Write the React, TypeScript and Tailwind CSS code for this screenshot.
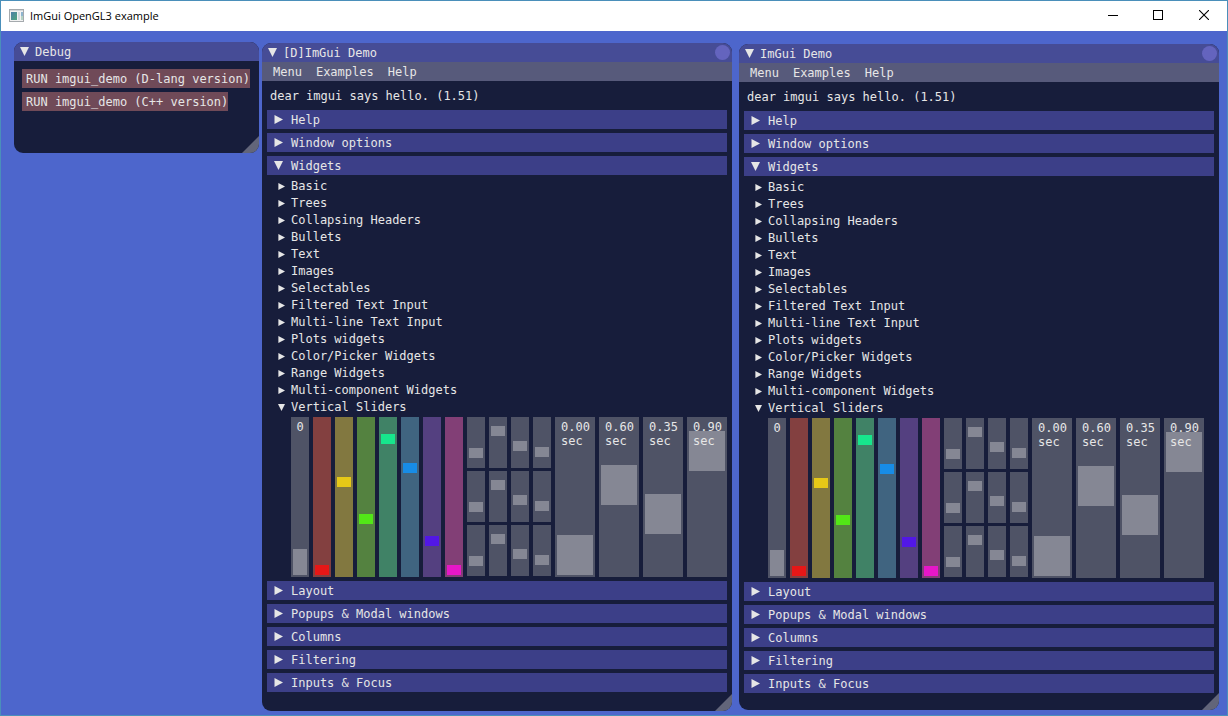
import React from "react";

type SliderSpec = { label: string; value: number; frame: string; grab: string };

const colorSliders: SliderSpec[] = [
  { label: "Hue 1", value: 0, frame: "bg-[#834040]", grab: "[&::-webkit-slider-thumb]:bg-[#e61717]" },
  { label: "Hue 2", value: 0.6, frame: "bg-[#827840]", grab: "[&::-webkit-slider-thumb]:bg-[#e6c817]" },
  { label: "Hue 3", value: 0.35, frame: "bg-[#548240]", grab: "[&::-webkit-slider-thumb]:bg-[#52e617]" },
  { label: "Hue 4", value: 0.9, frame: "bg-[#408266]", grab: "[&::-webkit-slider-thumb]:bg-[#17e68c]" },
  { label: "Hue 5", value: 0.7, frame: "bg-[#406480]", grab: "[&::-webkit-slider-thumb]:bg-[#178ce6]" },
  { label: "Hue 6", value: 0.2, frame: "bg-[#544080]", grab: "[&::-webkit-slider-thumb]:bg-[#5217e6]" },
  { label: "Hue 7", value: 0, frame: "bg-[#823f76]", grab: "[&::-webkit-slider-thumb]:bg-[#e617c8]" },
];

const smallValues = [0.22, 0.8, 0.4, 0.25];
const wideValues = [0, 0.6, 0.35, 0.9];

const treeItems = [
  "Basic",
  "Trees",
  "Collapsing Headers",
  "Bullets",
  "Text",
  "Images",
  "Selectables",
  "Filtered Text Input",
  "Multi-line Text Input",
  "Plots widgets",
  "Color/Picker Widgets",
  "Range Widgets",
  "Multi-component Widgets",
];

const lowerHeaders = ["Layout", "Popups & Modal windows", "Columns", "Filtering", "Inputs & Focus"];

const grabGray = "[&::-webkit-slider-thumb]:bg-[#858794]";
const frameGray = "bg-[#4f5366]";

function Arrow({ open = false, small = false }: { open?: boolean; small?: boolean }) {
  return (
    <svg viewBox="0 0 9 9" className={small ? "size-[7px] shrink-0" : "size-[9px] shrink-0"} fill="#e6e6e6" aria-hidden="true">
      <path d={open ? "M0 0H9L4.5 9Z" : "M0.5 0V9L9 4.5Z"} />
    </svg>
  );
}

function VSlider({
  label,
  value,
  size,
  frame,
  grab,
}: {
  label: string;
  value: number;
  size: string;
  frame: string;
  grab: string;
}) {
  return (
    <input
      type="range"
      aria-label={label}
      min={0}
      max={1}
      step="any"
      defaultValue={value}
      className={`m-0 block appearance-none p-0.5 [direction:rtl] [writing-mode:vertical-lr] [&::-webkit-slider-thumb]:appearance-none ${size} ${frame} ${grab}`}
    />
  );
}

function VerticalSliders() {
  const thin = "h-40 w-[18px] [&::-webkit-slider-thumb]:w-3.5 [&::-webkit-slider-thumb]:h-2.5";
  return (
    <div className="ml-6 flex gap-1 pb-1">
      <div className="relative">
        <VSlider
          label="int"
          value={0}
          size="h-40 w-[18px] [&::-webkit-slider-thumb]:w-3.5 [&::-webkit-slider-thumb]:h-[26px]"
          frame={frameGray}
          grab={grabGray}
        />
        <span className="pointer-events-none absolute inset-x-0 top-[3px] text-center leading-[14px]">0</span>
      </div>
      {colorSliders.map((s) => (
        <VSlider key={s.label} label={s.label} value={s.value} size={thin} frame={s.frame} grab={s.grab} />
      ))}
      {smallValues.map((v, col) => (
        <div key={col} className="flex flex-col gap-[3px]">
          {[0, 1, 2].map((row) => (
            <VSlider
              key={row}
              label={`Column ${col + 1} row ${row + 1}`}
              value={v}
              size="h-[51px] w-[18px] [&::-webkit-slider-thumb]:w-3.5 [&::-webkit-slider-thumb]:h-2.5"
              frame={frameGray}
              grab={grabGray}
            />
          ))}
        </div>
      ))}
      {wideValues.map((v) => (
        <div key={v} className="relative">
          <VSlider
            label={`${v.toFixed(2)} sec`}
            value={v}
            size="h-40 w-10 [&::-webkit-slider-thumb]:w-9 [&::-webkit-slider-thumb]:h-10"
            frame={frameGray}
            grab={grabGray}
          />
          <span className="pointer-events-none absolute top-[3px] left-1.5 leading-[14px]">
            {v.toFixed(2)}
            <br />
            sec
          </span>
        </div>
      ))}
    </div>
  );
}

function Header({ label, open = false }: { label: string; open?: boolean }) {
  return (
    <button
      type="button"
      aria-expanded={open}
      className="mb-1 flex h-[19px] w-full items-center gap-2 bg-[#3c3f88] pl-[7px] text-left"
    >
      <Arrow open={open} />
      <span className="pt-0.5">{label}</span>
    </button>
  );
}

function TreeItem({ label, open = false }: { label: string; open?: boolean }) {
  return (
    <button type="button" aria-expanded={open} className="flex h-[17px] w-full items-center gap-1.5 pb-0.5 pl-[11px] text-left">
      <Arrow open={open} small />
      {label}
    </button>
  );
}

function ImWindow({
  title,
  className,
  closable = false,
  children,
}: {
  title: string;
  className: string;
  closable?: boolean;
  children: React.ReactNode;
}) {
  return (
    <section className={`relative overflow-hidden rounded-[9px] bg-[#171d3b] ${className}`}>
      <header className="flex h-[19px] items-center bg-[#464c96] pr-0.5 pl-1.5">
        <button type="button" aria-label={`Collapse ${title}`} className="mr-1.5">
          <Arrow open />
        </button>
        <h2 className="flex-1 pt-0.5">{title}</h2>
        {closable && <button type="button" aria-label={`Close ${title}`} className="size-[15px] rounded-full bg-[#6464be]" />}
      </header>
      {children}
      <svg viewBox="0 0 17 17" className="absolute right-0 bottom-0 size-[17px]" fill="#62657a" aria-hidden="true">
        <path d="M17 0V17H0Z" />
      </svg>
    </section>
  );
}

function DemoWindow({ title, className }: { title: string; className: string }) {
  return (
    <ImWindow title={title} className={className} closable>
      <nav className="flex h-[19px] items-center gap-3.5 bg-[#575a7b] pt-0.5 pl-[11px]">
        <button type="button">Menu</button>
        <button type="button">Examples</button>
        <button type="button">Help</button>
      </nav>
      <div className="px-[5px]">
        <p className="px-[3px] pt-[9px] pb-[7px]">dear imgui says hello. (1.51)</p>
        <Header label="Help" />
        <Header label="Window options" />
        <Header label="Widgets" open />
        {treeItems.map((t) => (
          <TreeItem key={t} label={t} />
        ))}
        <TreeItem label="Vertical Sliders" open />
        <VerticalSliders />
        {lowerHeaders.map((t) => (
          <Header key={t} label={t} />
        ))}
      </div>
    </ImWindow>
  );
}

export default function App() {
  return (
    <div className="flex min-h-screen flex-col border border-[#4a8fba] bg-[#4d66cc]">
      <header className="flex h-[30px] items-center bg-white pl-2 font-['Open_Sans',sans-serif] text-[11px] text-black">
        <svg viewBox="0 0 15 13" className="mr-1.5 mb-0.5 h-[13px] w-[15px]" aria-hidden="true">
          <defs>
            <linearGradient id="pane" x1="0" y1="0" x2="1" y2="1">
              <stop offset="0" stopColor="#4d7fa8" />
              <stop offset="1" stopColor="#4fa57d" />
            </linearGradient>
          </defs>
          <rect x="0.5" y="0.5" width="14" height="12" fill="#f2f2f2" stroke="#a5aaae" />
          <rect x="1" y="1" width="13" height="1" fill="#d3d7da" />
          <rect x="2" y="3" width="6" height="8" fill="url(#pane)" />
          <rect x="9" y="3" width="2" height="8" fill="#d5dbe0" />
          <rect x="12" y="3" width="2" height="4" fill="#8fb5cf" />
          <rect x="12" y="7" width="2" height="4" fill="#b4d3c3" />
        </svg>
        <h1 className="flex-1">ImGui OpenGL3 example</h1>
        <button type="button" aria-label="Minimize" className="flex h-full w-[45px] items-center justify-center pb-0.5">
          <svg viewBox="0 0 10 10" className="size-2.5" aria-hidden="true">
            <path d="M0 5.5H10" stroke="#000" />
          </svg>
        </button>
        <button type="button" aria-label="Maximize" className="flex h-full w-[45px] items-center justify-center pb-0.5">
          <svg viewBox="0 0 10 10" className="size-2.5" aria-hidden="true">
            <rect x="0.5" y="0.5" width="9" height="9" fill="none" stroke="#000" />
          </svg>
        </button>
        <button type="button" aria-label="Close" className="flex h-full w-[47px] items-center justify-center pb-0.5">
          <svg viewBox="0 0 10 10" className="size-2.5" aria-hidden="true">
            <path d="M0 0L10 10M10 0L0 10" stroke="#000" strokeWidth="1.1" />
          </svg>
        </button>
      </header>
      <main className="flex flex-1 items-start pt-[11px] pr-2 pb-1 pl-[13px] font-['DejaVu_Sans_Mono',monospace] text-[12px] leading-[13px] text-[#e6e6e6]">
        <ImWindow title="Debug" className="w-[245px] shrink-0 pb-[42px]">
          <div className="flex flex-col items-start gap-1 px-2 pt-2">
            <button type="button" className="h-[19px] bg-[#704a58] pt-0.5 pl-1 whitespace-nowrap">
              RUN imgui_demo (D-lang version)
            </button>
            <button type="button" className="h-[19px] bg-[#704a58] pt-0.5 pl-1 whitespace-nowrap">
              RUN imgui_demo (C++ version)
            </button>
          </div>
        </ImWindow>
        <DemoWindow title="[D]ImGui Demo" className="mt-px ml-[3px] grow basis-[470px] pb-[15px]" />
        <DemoWindow title="ImGui Demo" className="mt-0.5 ml-[7px] grow basis-[480px] pb-[13px]" />
      </main>
    </div>
  );
}
